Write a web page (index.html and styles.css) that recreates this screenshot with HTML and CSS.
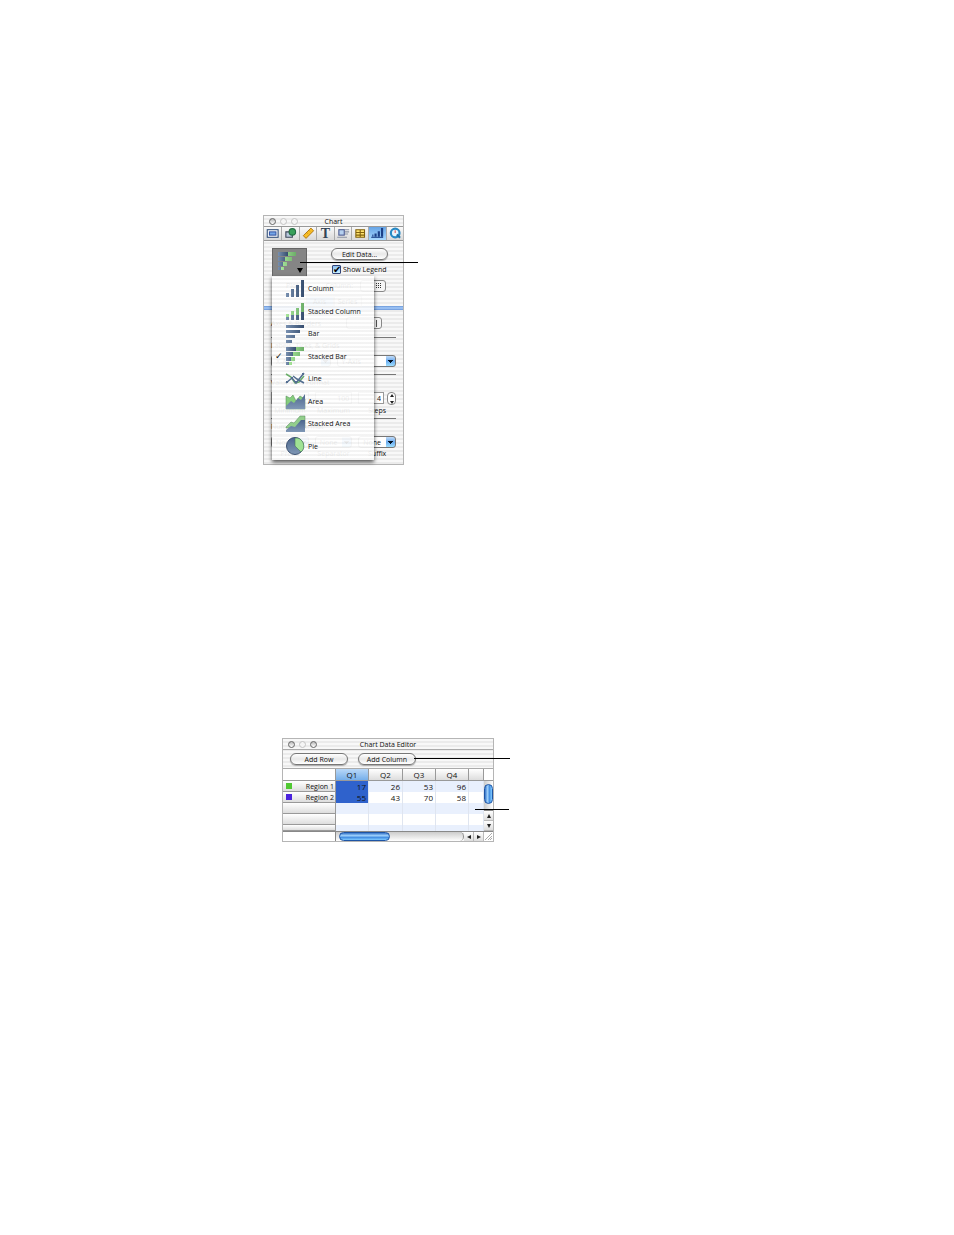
FILE: index.html
```html
<!doctype html>
<html lang="en">
<head>
	<meta charset="UTF-8">
	<title>Chart</title>
	<link rel="stylesheet" href="styles.css">
</head>
<body>
<svg class="defs" width="0" height="0" aria-hidden="true">
	<defs>
		<linearGradient id="blue"><stop offset="0" stop-color="#7890b0"/><stop offset="1" stop-color="#364d6e"/></linearGradient>
		<linearGradient id="green"><stop offset="0" stop-color="#a8e69a"/><stop offset="1" stop-color="#6cae68"/></linearGradient>
		<linearGradient id="slate" x2="0" y2="1"><stop offset="0" stop-color="#4c668d"/><stop offset="1" stop-color="#7f97b5"/></linearGradient>
		<g id="stacked-bar">
			<path fill="url(#blue)" d="M0 1h10v4H0zM0 6h7v4H0zM0 11h5v4H0zM0 16h3v3H0z"/>
			<path fill="url(#green)" d="M10 1h8v4h-8zM7 6h7v4H7zM5 11h4v4H5zM3 16h3v3H3z"/>
		</g>
	</defs>
</svg>
<div class="page">
	<section class="window chart">
		<header class="titlebar">
			<span class="lights"><i class="on"></i><i></i><i></i></span>
			<span>Chart</span>
		</header>
		<nav class="tools">
			<button aria-label="Document"><svg viewBox="1 1 15 12"><rect x="3.500" y="3.500" width="10" height="7" fill="#fff" stroke="#345078"/><rect x="5.500" y="5.500" width="6" height="3" fill="#75a6e8" stroke="#3657a4"/></svg></button>
			<button aria-label="Graphic"><svg viewBox="1 1 15 12"><path fill="#b9c8dc" stroke="#3b4658" d="M4.500 5.500h6v5h-6z"/><circle cx="10.500" cy="5.500" r="3" fill="#38a05a" stroke="#236b42"/></svg></button>
			<button aria-label="Metrics"><svg viewBox="1 1 15 12"><path fill="#f7bd26" stroke="#a66b08" stroke-width=".8" d="M4 9l7-7 2.500 2.500-7 7z"/><path stroke="#a66b08" stroke-width=".7" d="M7 6l1 1m1-3l1 1"/></svg></button>
			<button aria-label="Text" class="text-tool">T</button>
			<button aria-label="Wrap"><svg viewBox="1 1 15 12"><path stroke="#8b93a3" d="M10 3.500h4M10 5.500h4M10 7.500h3M3 10.500h9"/><rect x="4.500" y="3.500" width="5" height="5" fill="#b5d0ef" stroke="#4d5b90"/></svg></button>
			<button aria-label="Table"><svg viewBox="1 1 15 12"><path fill="#ffe36c" stroke="#80610e" d="M4.500 3.500h8v7h-8zM8.500 3.500v7M4.500 6h8m-8 2.500h8"/></svg></button>
			<button aria-label="Chart" class="picked"><svg viewBox="1 1 15 12"><path fill="#1a4088" d="M4 8h1v2H4zM6 7h2v3H6zM9 5h2v5H9zM12 2h2v8h-2z"/><path stroke="#1a4088" d="M3 10.500h11"/></svg></button>
			<button aria-label="QuickTime"><svg viewBox="1 1 15 12"><circle cx="8.500" cy="6.500" r="4" fill="#e6f4fc" stroke="#2789c5" stroke-width="2"/><path stroke="#1c71a8" stroke-width="2" d="M10 8l3 3"/><path stroke="#d55" d="M8.500 6.500V4"/></svg></button>
		</nav>
		<div class="panel">
			<div class="top">
				<button class="type" aria-label="Chart type">
					<svg width="19" height="20" viewBox="0 0 19 20"><use href="#stacked-bar"/></svg>
					<svg class="arrow" width="6" height="5"><path d="M0 0h6L3 5z"/></svg>
				</button>
				<div class="top-right">
					<button class="pill">Edit Data...</button>
					<label class="legend"><input type="checkbox" checked><span>Show Legend</span></label>
				</div>
			</div>
			<div class="plot"><span>Plot</span><span>Column:</span><button class="small" aria-label="Column"><svg width="6" height="6"><path fill="#333" d="M0 0h1v1H0zM2 0h1v1H2zM4 0h1v1H4zM0 2h1v1H0zM2 2h1v1H2zM4 2h1v1H4zM0 4h1v1H0zM2 4h1v1H2zM4 4h1v1H4z"/></svg></button></div>
			<div class="tabs"><button>Axis</button><button>Series</button></div>
			<div class="axes rule"><span>Axes &amp; Borders</span><button class="small" aria-label="Border"><svg width="3" height="7"><path stroke="#555" d="M1.500 0v7"/></svg></button></div>
			<div class="caption">Labels, Ticks, &amp; Grids</div>
			<div class="axis-row rule">
				<select aria-label="X-Axis"><option>X-Axis</option></select>
				<select aria-label="Y-Axis"><option>Y-Axis</option></select>
			</div>
			<div class="caption">Value Axis Format</div>
			<div class="triple range">
				<input type="text" aria-label="Minimum" value="0"><input type="text" aria-label="Maximum" value="100">
				<span class="steps"><input type="text" id="steps" value="4"><button class="stepper" aria-label="Change steps"><svg width="4" height="10"><path d="M0 3l2-3 2 3zM0 7l2 3 2-3z"/></svg></button></span>
			</div>
			<div class="triple names rule"><span>Minimum</span><span>Maximum</span><label for="steps">Steps</label></div>
			<div class="caption">Number Format</div>
			<div class="triple formats">
				<select aria-label="Prefix"><option>None</option></select>
				<select aria-label="Separator"><option>None</option></select>
				<select id="suffix"><option>None</option></select>
			</div>
			<div class="triple names"><span>Prefix</span><span>Separator</span><label for="suffix">Suffix</label></div>
		</div>
		<ul class="menu">
			<li><button><i></i><svg viewBox="0 0 19 20"><path fill="url(#blue)" d="M0 14h3v4H0zM5 10h3v8H5zM10 6h3v12h-3zM15 1h3v17h-3z"/></svg>Column</button></li>
			<li><button><i></i><svg viewBox="0 0 19 20"><path fill="url(#blue)" d="M0 16h3v3H0zM5 14h3v5H5zM10 14h3v5h-3zM15 11h3v8h-3z"/><path fill="url(#green)" d="M0 13h3v3H0zM5 10h3v4H5zM10 7h3v7h-3zM15 2h3v9h-3z"/></svg>Stacked Column</button></li>
			<li><button><i></i><svg viewBox="0 0 19 20"><path fill="url(#blue)" d="M0 1h18v3H0zM0 6h14v3H0zM0 11h9v3H0zM0 16h6v3H0z"/></svg>Bar</button></li>
			<li><button><i>✓</i><svg viewBox="0 0 19 20"><use href="#stacked-bar"/></svg>Stacked Bar</button></li>
			<li><button><i></i><svg viewBox="0 0 19 20"><path class="line green" d="M0 5l5 3 4 6 4-1 5-6"/><path class="line" d="M0 14l6-5 4 5 8-10M7 7l4 3 7 4"/><path fill="#536e91" d="M0 12h2v2H0zM5 8h2v2H5zM9 12h2v2H9zM16 4h2v2h-2z"/></svg>Line</button></li>
			<li><button><i></i><svg viewBox="0 0 19 20"><path fill="#85cd7d" stroke="#4c8550" stroke-width=".5" d="M0 5l4 2 3-3 3 6 4-5 5 3v10H0z"/><path fill="url(#slate)" d="M0 15l5-5 3 2 4-5 3 2 4-6v15H0z"/></svg>Area</button></li>
			<li><button><i></i><svg viewBox="0 0 19 20"><path fill="#92ce8c" stroke="#55845b" stroke-width=".5" d="M0 13l5-5 3 1 6-7h5v12H0z"/><path fill="url(#slate)" d="M0 16l5-4 4 1 6-7h4v12H0z"/></svg>Stacked Area</button></li>
			<li><button><i></i><svg viewBox="0 0 19 20"><circle cx="9" cy="10" r="8.500" fill="url(#slate)" stroke="#3b5172"/><path fill="#9fe294" stroke="#467b55" stroke-width=".6" d="M9 10V2a8 8 0 0 1 6 14z"/></svg>Pie</button></li>
		</ul>
		<span class="callout to-type"></span>
	</section>

	<section class="window editor">
		<header class="titlebar">
			<span class="lights"><i class="on"></i><i></i><i class="on"></i></span>
			<span>Chart Data Editor</span>
		</header>
		<div class="actions">
			<button class="pill">Add Row</button>
			<button class="pill">Add Column</button>
		</div>
		<div class="sheet">
			<table>
				<colgroup><col class="c-name"><col class="c-num"><col class="c-wide"><col class="c-num"><col class="c-num"><col></colgroup>
				<thead>
					<tr><td></td><th class="sel">Q1</th><th>Q2</th><th>Q3</th><th>Q4</th><th></th></tr>
				</thead>
				<tbody>
					<tr><th><span class="series"><i class="key-green"></i>Region 1</span></th><td class="sel">17</td><td>26</td><td>53</td><td>96</td><td></td></tr>
					<tr><th><span class="series"><i class="key-blue"></i>Region 2</span></th><td class="sel">55</td><td>43</td><td>70</td><td>58</td><td></td></tr>
					<tr><th></th><td></td><td></td><td></td><td></td><td></td></tr>
					<tr><th></th><td></td><td></td><td></td><td></td><td></td></tr>
					<tr class="cut"><th></th><td></td><td></td><td></td><td></td><td></td></tr>
				</tbody>
			</table>
			<div class="vscroll">
				<span class="corner"></span>
				<span class="track"><span class="thumb"></span></span>
				<button aria-label="Scroll up"><svg width="4" height="4"><path d="M0 4l2-4 2 4z"/></svg></button>
				<button aria-label="Scroll down"><svg width="4" height="4"><path d="M0 0l2 4 2-4z"/></svg></button>
			</div>
		</div>
		<div class="hscroll">
			<span class="blank"></span>
			<span class="track"><span class="thumb"></span></span>
			<button aria-label="Scroll left"><svg width="4" height="4"><path d="M4 0L0 2l4 2z"/></svg></button>
			<button aria-label="Scroll right"><svg width="4" height="4"><path d="M0 0l4 2-4 2z"/></svg></button>
			<span class="grip"><svg width="8" height="8"><path stroke="#888" stroke-width=".7" d="M1 8l7-7M4 8l4-4M6 8l2-2"/></svg></span>
		</div>
		<span class="callout to-add"></span>
		<span class="callout to-cell"></span>
	</section>
</div>
</body>
</html>
```
FILE: styles.css
```css
* {
	box-sizing: border-box;
	margin: 0;
	padding: 0;
}
body {
	background: #fff;
	color: #111;
	font: 500 7px/9px "Open Sans", "Noto Sans", sans-serif;
}
button, input, select {
	font: inherit;
	color: inherit;
	border: 0;
	background: none;
	appearance: none;
	min-width: 0;
}
svg {
	display: block;
	flex-shrink: 0;
	fill: none;
	overflow: visible;
}
.defs {
	position: absolute;
}
.page {
	padding: 215px 0 0 263px;
}
.window {
	position: relative;
	border: 1px solid #b5b5b5;
	background: repeating-linear-gradient(#f8f8f8 0 2px, #ebebeb 2px 4px);
}
.chart {
	width: 141px;
}
.editor {
	width: 212px;
	margin: 273px 0 0 19px;
}
.titlebar {
	display: grid;
	place-items: center;
	height: 10px;
}
.titlebar > * {
	grid-area: 1 / 1;
}
.lights {
	justify-self: start;
	display: flex;
	gap: 4px;
	padding-left: 5px;
}
.lights i {
	width: 7px;
	height: 7px;
	border: 1px solid #c4c4c4;
	border-radius: 50%;
	background: #f5f5f5;
}
.lights .on {
	border-color: #666;
	background: linear-gradient(#bbb, #fff);
}

/* inspector */
.tools {
	display: grid;
	grid-template-columns: repeat(8, 1fr);
	height: 15px;
	border: solid #999;
	border-width: 1px 0;
	background: linear-gradient(#f9f9f9, #d9d9d9);
}
.tools button + button {
	border-left: 1px solid #aaa;
}
.tools svg {
	width: 100%;
	height: 13px;
}
.tools .picked {
	background: linear-gradient(#66a4e6, #a9daff);
}
.tools .text-tool {
	font: bold 14px/13px "Liberation Serif", serif;
	color: #345;
}
.panel {
	padding: 0 7px 3px;
}
.top {
	display: flex;
	justify-content: space-between;
	height: 36px;
	padding: 7px 8px 0 1px;
}
.type {
	display: flex;
	width: 35px;
	height: 29px;
	padding: 2px 2px 3px 5px;
	border: 1px solid #666;
	background: #858585;
}
.type .arrow {
	align-self: flex-end;
	fill: #000;
}
.top-right {
	display: flex;
	flex-direction: column;
	gap: 5px;
}
.pill {
	height: 12px;
	width: 57px;
	border: 1px solid #777;
	border-radius: 6px;
	background: linear-gradient(#fff, #e8e8e8 50%, #fff);
	box-shadow: 0 1px 1px #aaa;
}
.legend {
	display: flex;
	align-items: center;
	gap: 2px;
	padding-left: 1px;
	white-space: nowrap;
}
.legend span {
	margin-right: -2px;
}
.legend input {
	display: grid;
	width: 9px;
	height: 9px;
	border: 1px solid #347;
	border-radius: 1px;
	background: linear-gradient(#8bc0f4, #c9f0ff);
}
.legend input::before {
	content: "✔";
	font: 10px/7px "DejaVu Sans", sans-serif;
	color: #000;
}
.plot, .axes {
	display: flex;
	align-items: center;
}
.plot {
	height: 17px;
	padding: 0 10px 0 15px;
	gap: 27px;
}
.small {
	display: flex;
	align-items: center;
	justify-content: flex-end;
	width: 36px;
	height: 12px;
	margin-left: auto;
	padding-right: 3px;
	border: 1px solid #888;
	border-radius: 3px;
	background: #f6f6f6;
}
.plot .small {
	margin-left: -20px;
}
.tabs {
	display: flex;
	justify-content: center;
	height: 19px;
	margin: 0 -7px;
	padding: 2px 0 6px;
	background: linear-gradient(#6a96d8, #a5cbfa, #6a96d8) 0 12px / 100% 4px no-repeat;
}
.tabs button {
	width: 28px;
	border: 1px solid #bbb;
	background: #eee;
}
.tabs button:first-child {
	background: #9cc7f5;
}
.rule {
	border-bottom: 1px solid #777;
}
.axes {
	justify-content: space-between;
	height: 25px;
	padding: 0 14px 4px 0;
}
.caption {
	height: 16px;
	line-height: 16px;
}
.axis-row {
	display: grid;
	grid-template-columns: 1fr 1fr;
	gap: 6px;
	height: 21px;
	padding: 1px 0 7px;
}
select {
	width: 100%;
	height: 12px;
	padding-left: 4px;
	border: 1px solid #777;
	border-radius: 3px;
	background:
		linear-gradient(#012, #012) right 2px top 4px / 5px 1px no-repeat,
		linear-gradient(#012, #012) right 3px top 5px / 3px 1px no-repeat,
		linear-gradient(#012, #012) right 4px top 6px / 1px 1px no-repeat,
		linear-gradient(#c2dcf8, #69a9ee 50%, #9fe0ff) right / 9px 100% no-repeat,
		#fff;
}
.triple {
	display: grid;
	grid-template-columns: repeat(3, 1fr);
	gap: 6px;
}
.range {
	height: 15px;
	padding-top: 1px;
}
.triple input {
	width: 100%;
	height: 12px;
	padding-right: 2px;
	border: 1px solid #999;
	background: #fff;
	text-align: right;
}
.steps {
	display: flex;
	gap: 3px;
}
.stepper {
	display: grid;
	place-content: center;
	flex: 0 0 9px;
	height: 13px;
	border: 1px solid #888;
	border-radius: 4px;
	background: #fff;
}
.stepper svg, .vscroll svg, .hscroll svg {
	fill: #222;
}
.names {
	height: 12px;
	text-align: center;
}
.names.rule {
	height: 13px;
}
.formats {
	height: 14px;
	padding-top: 1px;
}

/* open chart type menu */
.menu {
	position: absolute;
	top: 60px;
	left: 8px;
	width: 102px;
	padding: 1px 0 3px;
	list-style: none;
	background: repeating-linear-gradient(rgba(255, 255, 255, .93) 0 2px, rgba(244, 244, 244, .92) 2px 4px);
	box-shadow: 0 2px 4px rgba(0, 0, 0, .7);
}
.menu li:nth-child(odd) {
	height: 23px;
}
.menu li:nth-child(even) {
	height: 22px;
}
.menu button {
	display: flex;
	align-items: center;
	width: 100%;
	height: 100%;
	gap: 3px;
	padding-left: 3px;
	text-align: left;
	white-space: nowrap;
}
.menu i {
	width: 8px;
	font: 9px/9px "DejaVu Sans", sans-serif;
}
.menu svg {
	width: 19px;
	height: 20px;
}
.line {
	stroke: #536e91;
	stroke-width: 1.5px;
}
.line.green {
	stroke: #6aae68;
}

/* data editor */
.actions {
	display: flex;
	align-items: center;
	gap: 10px;
	height: 20px;
	padding: 0 7px;
	border: solid #aaa;
	border-width: 1px 0;
}
.actions .pill {
	width: 58px;
}
.sheet, .hscroll {
	display: flex;
}
table {
	flex: 1;
	min-width: 0;
	table-layout: fixed;
	border-collapse: separate;
	border-spacing: 0;
	background: #fff;
	line-height: 9px;
}
.c-name {
	width: 53px;
}
.c-num {
	width: 33px;
}
.c-wide {
	width: 34px;
}
tr {
	height: 11px;
}
td, th {
	font-weight: inherit;
	text-align: right;
	padding-right: 2px;
	border-right: 1px solid #dfe5f0;
}
td {
	font-size: 8px;
}
thead tr {
	height: 12px;
}
thead th {
	padding: 0;
	text-align: center;
	border: solid #999;
	border-width: 0 1px 1px 0;
	background: linear-gradient(#fff, #ddd);
	font-size: 8px;
}
thead td {
	border: solid #999;
	border-width: 0 1px 1px 0;
}
thead .sel {
	background: linear-gradient(#b9d8f8, #76afea);
}
tbody th {
	padding-right: 1px;
	border: solid #999;
	border-width: 0 1px 1px 0;
	background: linear-gradient(#fff, #ddd);
}
tbody tr:nth-child(odd) {
	background: #e9f0fd;
}
tbody .sel {
	background: #2f62cc;
}
.cut {
	height: 6px;
}
.series {
	display: flex;
	align-items: center;
	justify-content: space-between;
	padding-left: 3px;
}
.series i {
	width: 6px;
	height: 6px;
}
.key-green {
	background: #50c832;
}
.key-blue {
	background: #4b22dd;
}
.vscroll {
	display: flex;
	flex-direction: column;
	width: 9px;
	background: #eee;
}
.corner {
	height: 12px;
	border-bottom: 1px solid #999;
	background: #fff;
}
.vscroll .track {
	flex: 1;
	padding: 3px 0 6px;
	border-bottom: 1px solid #888;
	background: linear-gradient(90deg, #ccc, #fff);
}
.thumb {
	display: block;
	height: 100%;
	border: 1px solid #1e55a5;
	border-radius: 5px;
	background: linear-gradient(90deg, #3674c9, #a5d7ff 40%, #3f8ae0 60%, #80cbff);
}
.vscroll button, .hscroll button {
	display: grid;
	place-content: center;
	width: 9px;
	height: 10px;
	border-bottom: 1px solid #bbb;
	background: linear-gradient(#fff, #ddd);
}
.hscroll {
	height: 10px;
	border-top: 1px solid #888;
}
.blank {
	width: 53px;
	border-right: 1px solid #888;
	background: #fff;
}
.hscroll .track {
	flex: 1;
	padding: 0 3px;
	border-right: 1px solid #888;
	border-radius: 0 5px 5px 0;
	background: linear-gradient(#ccc, #fff);
}
.hscroll .thumb {
	width: 51px;
	background: linear-gradient(#3674c9, #a5d7ff 40%, #3f8ae0 60%, #80cbff);
}
.hscroll button {
	width: 10px;
	height: 9px;
	border: 0;
	border-right: 1px solid #bbb;
}
.grip {
	width: 9px;
	background: #fff;
}
.callout {
	position: absolute;
	height: 1px;
	background: #000;
}
.to-type {
	top: 46px;
	left: 36px;
	width: 118px;
}
.to-add {
	top: 19px;
	left: 131px;
	width: 96px;
}
.to-cell {
	top: 70px;
	left: 192px;
	width: 34px;
}
```
